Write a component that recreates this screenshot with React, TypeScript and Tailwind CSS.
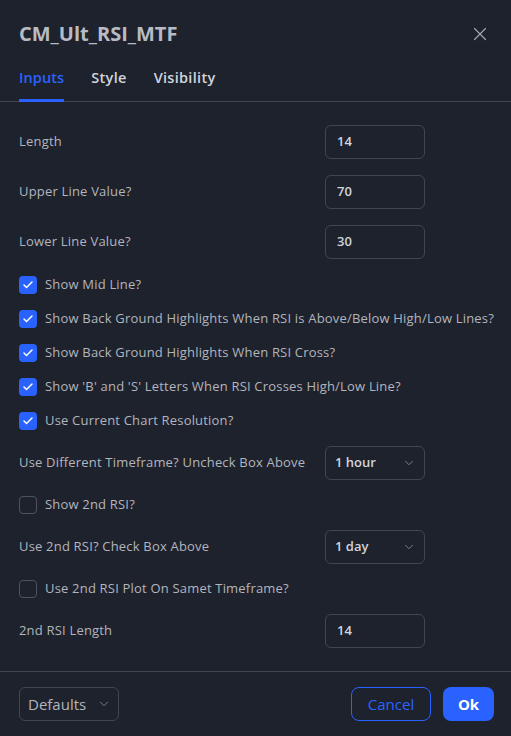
import { X, ChevronDown, Check } from "lucide-react";

const font = { fontFamily: '"Open Sans", "Noto Sans", sans-serif' };

function NumberField({ value }: { value: string }) {
  return (
    <div className="w-[100px] h-[34px] rounded-md border border-[#434651] flex items-center px-[11px] text-[13px] font-semibold text-[#d1d4dc]">
      {value}
    </div>
  );
}

function SelectField({ value }: { value: string }) {
  return (
    <div className="w-[100px] h-[34px] rounded-md border border-[#434651] flex items-center justify-between pl-[9px] pr-[8px] text-[13px] font-semibold text-[#d1d4dc]">
      <span>{value}</span>
      <ChevronDown size={14} strokeWidth={1.5} className="text-[#868993]" />
    </div>
  );
}

function FieldRow({ label, children }: { label: string; children: React.ReactNode }) {
  return (
    <div className="flex items-center h-[34px]">
      <div className="w-[306px] text-[13px] tracking-[0.19px] text-[#b2b5be]">{label}</div>
      {children}
    </div>
  );
}

function CheckRow({ label, checked }: { label: string; checked: boolean }) {
  return (
    <div className="flex items-center gap-[8px] h-[18px]">
      {checked ? (
        <div className="shrink-0 w-[18px] h-[18px] rounded-[4px] bg-[#2962ff] flex items-center justify-center">
          <Check size={12} strokeWidth={3} className="text-white" />
        </div>
      ) : (
        <div className="shrink-0 w-[18px] h-[18px] rounded-[4px] border border-[#50535e]" />
      )}
      <span className="text-[13px] tracking-[0.19px] text-[#b2b5be] whitespace-nowrap">{label}</span>
    </div>
  );
}

export default function App() {
  return (
    <div className="w-[511px] h-[736px] bg-[#1e222d] flex flex-col" style={font}>
      {/* Header */}
      <div className="flex items-center justify-between pl-[19px] pr-[20px] pt-[10px] h-[57px]">
        <h1 className="text-[20px] font-bold text-[#b8bbc3]">CM_Ult_RSI_MTF</h1>
        <X size={22} strokeWidth={1.3} className="text-[#a3a6af]" />
      </div>

      {/* Tabs */}
      <div className="border-b border-[#434651] flex gap-[27px] px-[19px] h-[45px] items-end">
        <div className="text-[14.5px] tracking-[0.1px] font-semibold text-[#2962ff] border-b-[3px] border-[#2962ff] pb-[10px] -mb-[1px]">Inputs</div>
        <div className="text-[14.5px] tracking-[0.3px] font-semibold text-[#d1d4dc] pb-[12px]">Style</div>
        <div className="text-[14.5px] tracking-[0.3px] font-semibold text-[#d1d4dc] pb-[12px]">Visibility</div>
      </div>

      {/* Body */}
      <div className="flex-1 flex flex-col px-[19px] pt-[23px]">
        <FieldRow label="Length"><NumberField value="14" /></FieldRow>
        <div className="h-[16px]" />
        <FieldRow label="Upper Line Value?"><NumberField value="70" /></FieldRow>
        <div className="h-[16px]" />
        <FieldRow label="Lower Line Value?"><NumberField value="30" /></FieldRow>
        <div className="flex flex-col gap-[16px] mt-[17px]">
          <CheckRow checked label="Show Mid Line?" />
          <CheckRow checked label="Show Back Ground Highlights When RSI is Above/Below High/Low Lines?" />
          <CheckRow checked label="Show Back Ground Highlights When RSI Cross?" />
          <CheckRow checked label="Show 'B' and 'S' Letters When RSI Crosses High/Low Line?" />
          <CheckRow checked label="Use Current Chart Resolution?" />
        </div>
        <div className="mt-[16px]">
          <FieldRow label="Use Different Timeframe? Uncheck Box Above"><SelectField value="1 hour" /></FieldRow>
        </div>
        <div className="mt-[16px]">
          <CheckRow checked={false} label="Show 2nd RSI?" />
        </div>
        <div className="mt-[16px]">
          <FieldRow label="Use 2nd RSI? Check Box Above"><SelectField value="1 day" /></FieldRow>
        </div>
        <div className="mt-[16px]">
          <CheckRow checked={false} label="Use 2nd RSI Plot On Samet Timeframe?" />
        </div>
        <div className="mt-[16px]">
          <FieldRow label="2nd RSI Length"><NumberField value="14" /></FieldRow>
        </div>
      </div>

      {/* Footer */}
      <div className="border-t border-[#434651] h-[65px] flex items-center justify-between pl-[19px] pr-[17px]">
        <div className="w-[100px] h-[34px] rounded-md border border-[#434651] flex items-center justify-between pl-[8px] pr-[7px] text-[15px] text-[#b2b5be]">
          <span>Defaults</span>
          <ChevronDown size={14} strokeWidth={1.5} className="text-[#868993]" />
        </div>
        <div className="flex gap-[12px]">
          <div className="w-[80px] h-[34px] rounded-lg border border-[#2962ff] flex items-center justify-center text-[15px] text-[#2962ff]">Cancel</div>
          <div className="w-[51px] h-[34px] rounded-lg bg-[#2962ff] flex items-center justify-center text-[15px] font-bold text-white">Ok</div>
        </div>
      </div>
    </div>
  );
}
